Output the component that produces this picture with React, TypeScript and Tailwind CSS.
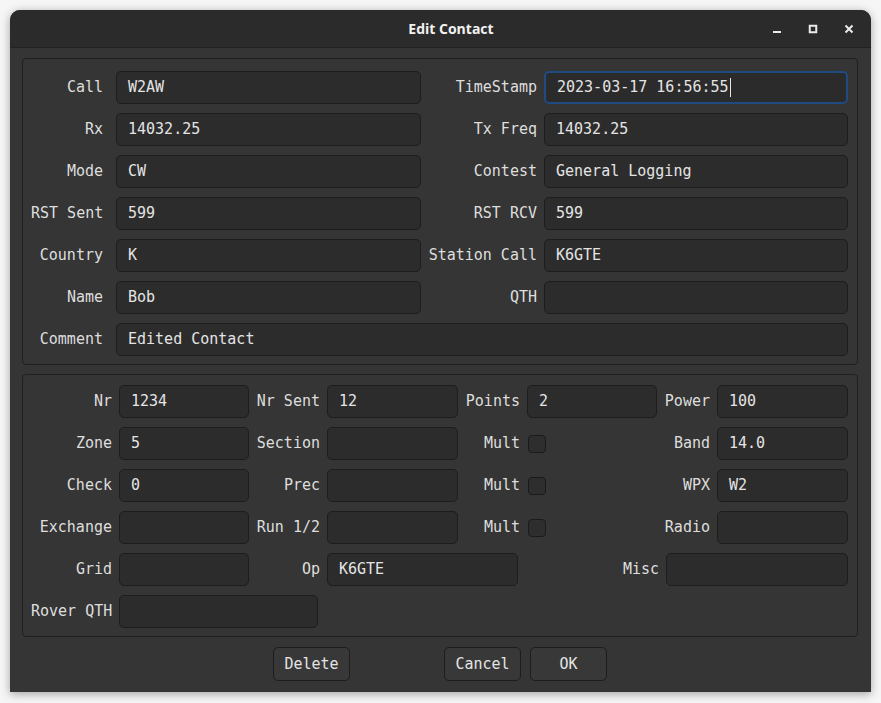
import React from 'react';

const mono = { fontFamily: '"DejaVu Sans Mono", "Liberation Mono", monospace' };

function Label({ text, w }: { text: string; w: number | string }) {
    return (
        <div className="shrink-0 text-right text-[15px] text-[#dedede] whitespace-nowrap" style={{ width: w }}>
            {text}
        </div>
    );
}

function Field({ value = '', w, focused = false, className = '' }: { value?: string; w?: number; focused?: boolean; className?: string }) {
    return (
        <div
            className={`shrink-0 h-[33px] rounded-[5px] flex items-center px-[11px] text-[15px] text-[#e4e4e4] whitespace-nowrap ${
                focused ? 'border-2 border-[#1f4b82] bg-[#2b2b2b] px-[10px]' : 'border border-[#1d1d1d] bg-[#2c2c2c]'
            } ${className}`}
            style={w !== undefined ? { width: w } : undefined}
        >
            {value}
            {focused && <span className="inline-block w-px h-[19px] bg-[#e4e4e4] ml-px" />}
        </div>
    );
}

function Check() {
    return <div className="shrink-0 w-[18px] h-[18px] rounded-[4px] border border-[#1a1a1a] bg-[#2e2e2e]" />;
}

function Button({ text }: { text: string }) {
    return (
        <button className="w-[77px] h-[34px] rounded-[5px] border border-[#1d1d1d] bg-[#383838] text-[15px] text-[#e4e4e4]">
            {text}
        </button>
    );
}

export default function App() {
    return (
        <div className="w-[881px] h-[703px] bg-[#f6f6f6] p-[10px]" style={mono}>
            <div className="w-[861px] h-[682px] rounded-t-[10px] bg-[#353535] overflow-hidden flex flex-col shadow-[0_2px_10px_rgba(0,0,0,0.35)]">
                {/* title bar */}
                <div className="h-[38px] shrink-0 bg-[#2b2b2b] border-b border-[#222] flex items-center relative">
                    <div className="flex-1 text-center pl-[21px] text-[14px] font-bold text-[#f2f2f2]" style={{ fontFamily: '"Open Sans", "Noto Sans", sans-serif' }}>
                        Edit Contact
                    </div>
                    <div className="absolute right-[17px] top-0 h-full flex items-center gap-[26px]">
                        <svg width="10" height="10" viewBox="0 0 10 10">
                            <rect x="1" y="7" width="8" height="2" fill="#eaeaea" />
                        </svg>
                        <svg width="10" height="10" viewBox="0 0 10 10">
                            <rect x="1.75" y="1.75" width="6.5" height="6.5" fill="none" stroke="#eaeaea" strokeWidth="2" />
                        </svg>
                        <svg width="10" height="10" viewBox="0 0 10 10">
                            <path d="M1.5 1.5 L8.5 8.5 M8.5 1.5 L1.5 8.5" stroke="#eaeaea" strokeWidth="2" />
                        </svg>
                    </div>
                </div>

                {/* body */}
                <div className="flex-1 flex flex-col pl-[12px] pr-[13px] pt-[10px]">
                    {/* group 1 */}
                    <div className="rounded-[4px] border border-[#1f1f1f] pl-[8px] pr-[9px] pt-[12px] pb-[8px] flex flex-col gap-[9px]">
                        {[
                            ['Call', 'W2AW', 'TimeStamp', '2023-03-17 16:56:55'],
                            ['Rx', '14032.25', 'Tx Freq', '14032.25'],
                            ['Mode', 'CW', 'Contest', 'General Logging'],
                            ['RST Sent', '599', 'RST RCV', '599'],
                            ['Country', 'K', 'Station Call', 'K6GTE'],
                            ['Name', 'Bob', 'QTH', ''],
                        ].map(([l1, v1, l2, v2], i) => (
                            <div key={i} className="flex items-center">
                                <Label text={l1} w={72} />
                                <Field value={v1} w={305} className="ml-[13px]" />
                                <Label text={l2} w={116} />
                                <Field value={v2} w={304} className="ml-[7px]" focused={i === 0} />
                            </div>
                        ))}
                        <div className="flex items-center">
                            <Label text="Comment" w={72} />
                            <Field value="Edited Contact" className="ml-[13px] flex-1" />
                        </div>
                    </div>

                    {/* group 2 */}
                    <div className="mt-[9px] rounded-[4px] border border-[#1f1f1f] pl-[8px] pr-[9px] pt-[10px] pb-[8px] flex flex-col gap-[9px]">
                        <div className="flex items-center">
                            <Label text="Nr" w={81} />
                            <Field value="1234" w={130} className="ml-[7px]" />
                            <Label text="Nr Sent" w={71} />
                            <Field value="12" w={131} className="ml-[7px]" />
                            <Label text="Points" w={62} />
                            <Field value="2" w={130} className="ml-[7px]" />
                            <Label text="Power" w={53} />
                            <Field value="100" w={131} className="ml-[7px]" />
                        </div>
                        {[
                            ['Zone', '5', 'Section', 'Band', '14.0'],
                            ['Check', '0', 'Prec', 'WPX', 'W2'],
                            ['Exchange', '', 'Run 1/2', 'Radio', ''],
                        ].map(([l1, v1, l2, l4, v4], i) => (
                            <div key={i} className="flex items-center">
                                <Label text={l1} w={81} />
                                <Field value={v1} w={130} className="ml-[7px]" />
                                <Label text={l2} w={71} />
                                <Field w={131} className="ml-[7px]" />
                                <Label text="Mult" w={62} />
                                <div className="ml-[8px] w-[129px] shrink-0 flex">
                                    <Check />
                                </div>
                                <Label text={l4} w={53} />
                                <Field value={v4} w={131} className="ml-[7px]" />
                            </div>
                        ))}
                        <div className="flex items-center">
                            <Label text="Grid" w={81} />
                            <Field w={130} className="ml-[7px]" />
                            <Label text="Op" w={71} />
                            <Field value="K6GTE" w={191} className="ml-[7px]" />
                            <Label text="Misc" w={141} />
                            <Field w={182} className="ml-[7px]" />
                        </div>
                        <div className="flex items-center">
                            <Label text="Rover QTH" w={81} />
                            <Field w={199} className="ml-[7px]" />
                        </div>
                    </div>

                    {/* buttons */}
                    <div className="mt-[10px] flex items-center">
                        <div className="ml-[251px]">
                            <Button text="Delete" />
                        </div>
                        <div className="ml-[94px]">
                            <Button text="Cancel" />
                        </div>
                        <div className="ml-[9px]">
                            <Button text="OK" />
                        </div>
                    </div>
                </div>
            </div>
        </div>
    );
}
